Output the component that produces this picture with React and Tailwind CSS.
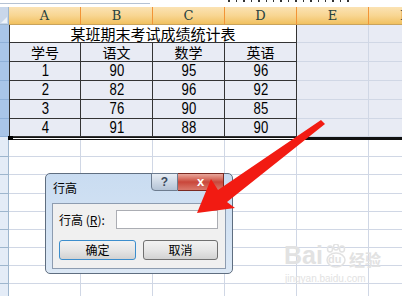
import React from "react";

const cols = ["A", "B", "C", "D", "E", "F"];

const rows = [
  ["学号", "语文", "数学", "英语"],
  ["1", "90", "95", "96"],
  ["2", "82", "96", "92"],
  ["3", "76", "90", "85"],
  ["4", "91", "88", "90"],
];

const rowHeights = ["h-[19px]", "h-[19px]", "h-[19px]", "h-[19px]", "h-[18px]"];
const emptyHeights = ["h-[17px]", "h-[18px]", "h-[19px]", "h-[18px]", "h-[18px]", "h-[18px]", "h-[18px]", "h-[18px]", "h-[14px]"];

const cjk = { fontFamily: '"Noto Sans CJK SC", "Liberation Sans", sans-serif' };
const num = { fontFamily: '"Liberation Sans", Arial, sans-serif' };

// light grid cells to the right of the table (E, F and the rest)
const SideCells = ({ tint }) => (
  <>
    <div className={`w-[72px] shrink-0 border-r border-b border-[#d0d7e5] ${tint ? "bg-[#e8ebf4]" : "bg-white"}`}></div>
    <div className={`w-[72px] shrink-0 border-r border-b border-[#d0d7e5] ${tint ? "bg-[#e8ebf4]" : "bg-white"}`}></div>
  </>
);

const Arrow = () => (
  <svg className="absolute left-0 top-0 pointer-events-none" width="402" height="296" viewBox="0 0 402 296">
    <polygon
      points="197,213 211,179 218,190 321,120 325,124 227,202 235,208"
      fill="#f21b12"
    />
  </svg>
);

// faint baidu jingyan mark in the corner
const Watermark = () => (
  <div className="absolute left-[284px] top-[243px] flex flex-col items-start pointer-events-none">
    <div className="flex items-end leading-none text-[#e2e2e2]">
      <span className="text-[25px] font-bold" style={num}>Bai</span>
      <span className="relative w-[24px] h-[24px] mx-[1px]">
        <svg className="absolute left-0 top-0" width="24" height="24" viewBox="0 0 24 24">
          <ellipse cx="6" cy="5" rx="2.5" ry="3" fill="none" stroke="#e2e2e2" strokeWidth="1.5" />
          <ellipse cx="12" cy="3" rx="2.5" ry="3" fill="none" stroke="#e2e2e2" strokeWidth="1.5" />
          <ellipse cx="18" cy="5" rx="2.5" ry="3" fill="none" stroke="#e2e2e2" strokeWidth="1.5" />
          <ellipse cx="12" cy="16" rx="9" ry="7" fill="none" stroke="#e2e2e2" strokeWidth="1.5" />
        </svg>
        <span className="absolute left-[4px] bottom-[3px] text-[11px] font-bold" style={num}>du</span>
      </span>
      <span className="text-[16px] font-bold mb-[1px]" style={cjk}>经验</span>
    </div>
    <div className="text-[10px] text-[#e2e2e2] mt-[3px] ml-[1px]" style={num}>jingyan.baidu.com</div>
  </div>
);

const Dialog = () => (
  <div className="absolute left-[45px] top-[173px] w-[188px] h-[101px] rounded-[5px] border border-[#5f6e80] bg-gradient-to-b from-[#c9dcf1] to-[#dce8f5] flex flex-col">
    {/* title bar */}
    <div className="h-[29px] flex items-start justify-between relative">
      <span className="text-[12px] text-black ml-[7px] mt-[8px] leading-none" style={cjk}>行高</span>
      <div className="flex mr-[8px] -mt-px">
        <div className="w-[27px] h-[18px] rounded-bl-[4px] border border-[#6d7c8f] bg-gradient-to-b from-[#e8eef5] to-[#b4c3d5] flex items-center justify-center text-[12px] font-bold text-[#3b4a5c]" style={num}>?</div>
        <div className="w-[46px] h-[18px] rounded-br-[4px] border border-l-0 border-[#7a2a22] bg-gradient-to-b from-[#e8a79c] via-[#c9463a] to-[#d9786b] flex items-center justify-center text-[13px] font-bold text-white" style={num}>x</div>
      </div>
    </div>
    {/* client area */}
    <div className="mx-[6px] mb-[4px] flex-1 border border-[#8d9cb0] bg-[#f0f0f0] flex flex-col px-[6px] pt-[6px]">
      <div className="flex items-center h-[19px]">
        <span className="text-[12px] text-black w-[57px]" style={cjk}>
          行高 (<span className="underline">R</span>):
        </span>
        <div className="w-[102px] h-[19px] bg-white border border-[#abadb3]"></div>
      </div>
      <div className="flex gap-[7px] mt-[11px]">
        <div className="w-[77px] h-[20px] rounded-[3px] border border-[#3c8ecd] bg-gradient-to-b from-[#f2f2f2] via-[#e6e6e6] to-[#d2d2d2] flex items-center justify-center text-[12px] text-black" style={cjk}>
          确定
        </div>
        <div className="w-[75px] h-[20px] rounded-[3px] border border-[#707070] bg-gradient-to-b from-[#f2f2f2] via-[#e6e6e6] to-[#d2d2d2] flex items-center justify-center text-[12px] text-black" style={cjk}>
          取消
        </div>
      </div>
    </div>
  </div>
);

export default function App() {
  return (
    <div className="relative w-[402px] h-[296px] overflow-hidden bg-white">
      {/* formula bar remnant */}
      <div className="h-[7px] relative">
        <div className="flex gap-[6px] ml-[228px] h-[2px]">
          {[2, 1, 2, 1, 2, 1, 1, 2, 1, 2, 1, 2, 1, 1, 2, 1, 2].map((w, i) => (
            <div key={i} className="h-[2px] bg-[#333]" style={{ width: w }}></div>
          ))}
        </div>
        <div className="h-px mt-[1px] w-[150px] bg-[#b5c2d3]"></div>
      </div>

      {/* column header */}
      <div className="flex h-[18px]">
        <div className="w-[9px] shrink-0 bg-[#c9d7ea] border-r border-b border-[#9eb6ce] relative">
          <div className="absolute right-[1px] bottom-[1px] w-0 h-0 border-l-[6px] border-l-transparent border-b-[6px] border-b-[#eef3f9]"></div>
        </div>
        {cols.map((c) => (
          <div
            key={c}
            className="w-[72px] shrink-0 border-r border-b border-r-[#f29436] border-b-[#c9a35c] bg-gradient-to-b from-[#fbe3b4] via-[#f8d692] to-[#f1c15f] flex items-center justify-center text-[13px] text-[#27413e]"
            style={{ fontFamily: '"DejaVu Serif", "Liberation Serif", serif' }}
          >
            {c}
          </div>
        ))}
        <div className="flex-1 bg-gradient-to-b from-[#fbe3b4] to-[#f1c15f] border-b border-[#c9a35c]"></div>
      </div>

      {/* title row */}
      <div className="flex h-[18px]">
        <div className="w-[9px] shrink-0 bg-[#a9c5e8] border-b border-[#8fb0d8]"></div>
        <div className="w-[288px] shrink-0 bg-white border-l border-r border-b border-[#333] flex items-center justify-center text-black" style={cjk}>
          <span className="inline-block text-[15px] leading-[15px]">某班期末考试成绩统计表</span>
        </div>
        <SideCells tint />
        <div className="flex-1 bg-[#e8ebf4] border-b border-[#d0d7e5]"></div>
      </div>

      {/* data rows */}
      {rows.map((r, i) => (
        <div key={i} className={`flex ${rowHeights[i]}`}>
          <div className="w-[9px] shrink-0 bg-[#a9c5e8] border-b border-[#8fb0d8]"></div>
          {r.map((v, j) => (
            <div
              key={j}
              className={`w-[72px] shrink-0 bg-[#e8ebf4] border-r border-b border-[#333] flex items-center justify-center text-black ${j === 0 ? "border-l" : ""}`}
              style={i === 0 ? cjk : num}
            >
              <span className={i === 0 ? "inline-block text-[14px] leading-[14px]" : "inline-block text-[16px] leading-[16px] scale-x-[0.82]"}>{v}</span>
            </div>
          ))}
          <SideCells tint />
          <div className="flex-1 bg-[#e8ebf4] border-b border-[#d0d7e5]"></div>
        </div>
      ))}

      {/* selection bottom edge */}
      <div className="flex h-[3px] relative">
        <div className="w-[9px] shrink-0 bg-[#e4ecf7] border-r border-[#9eb6ce]"></div>
        <div className="w-[288px] shrink-0 flex flex-col">
          <div className="h-px bg-[#111]"></div>
          <div className="h-px bg-white"></div>
          <div className="h-px bg-[#111]"></div>
        </div>
        <div className="flex-1 bg-[#111]"></div>
        <div className="absolute left-[8px] top-[-1px] w-[5px] h-[4px] bg-black"></div>
      </div>

      {/* empty rows */}
      {emptyHeights.map((h, i) => (
        <div key={i} className={`flex ${h}`}>
          <div className="w-[9px] shrink-0 bg-[#e4ecf7] border-r border-b border-[#9eb6ce]"></div>
          {[0, 1, 2, 3].map((j) => (
            <div key={j} className="w-[72px] shrink-0 border-r border-b border-[#d0d7e5]"></div>
          ))}
          <SideCells />
          <div className="flex-1 border-b border-[#d0d7e5]"></div>
        </div>
      ))}

      <Watermark />
      <Dialog />
      <Arrow />
    </div>
  );
}
